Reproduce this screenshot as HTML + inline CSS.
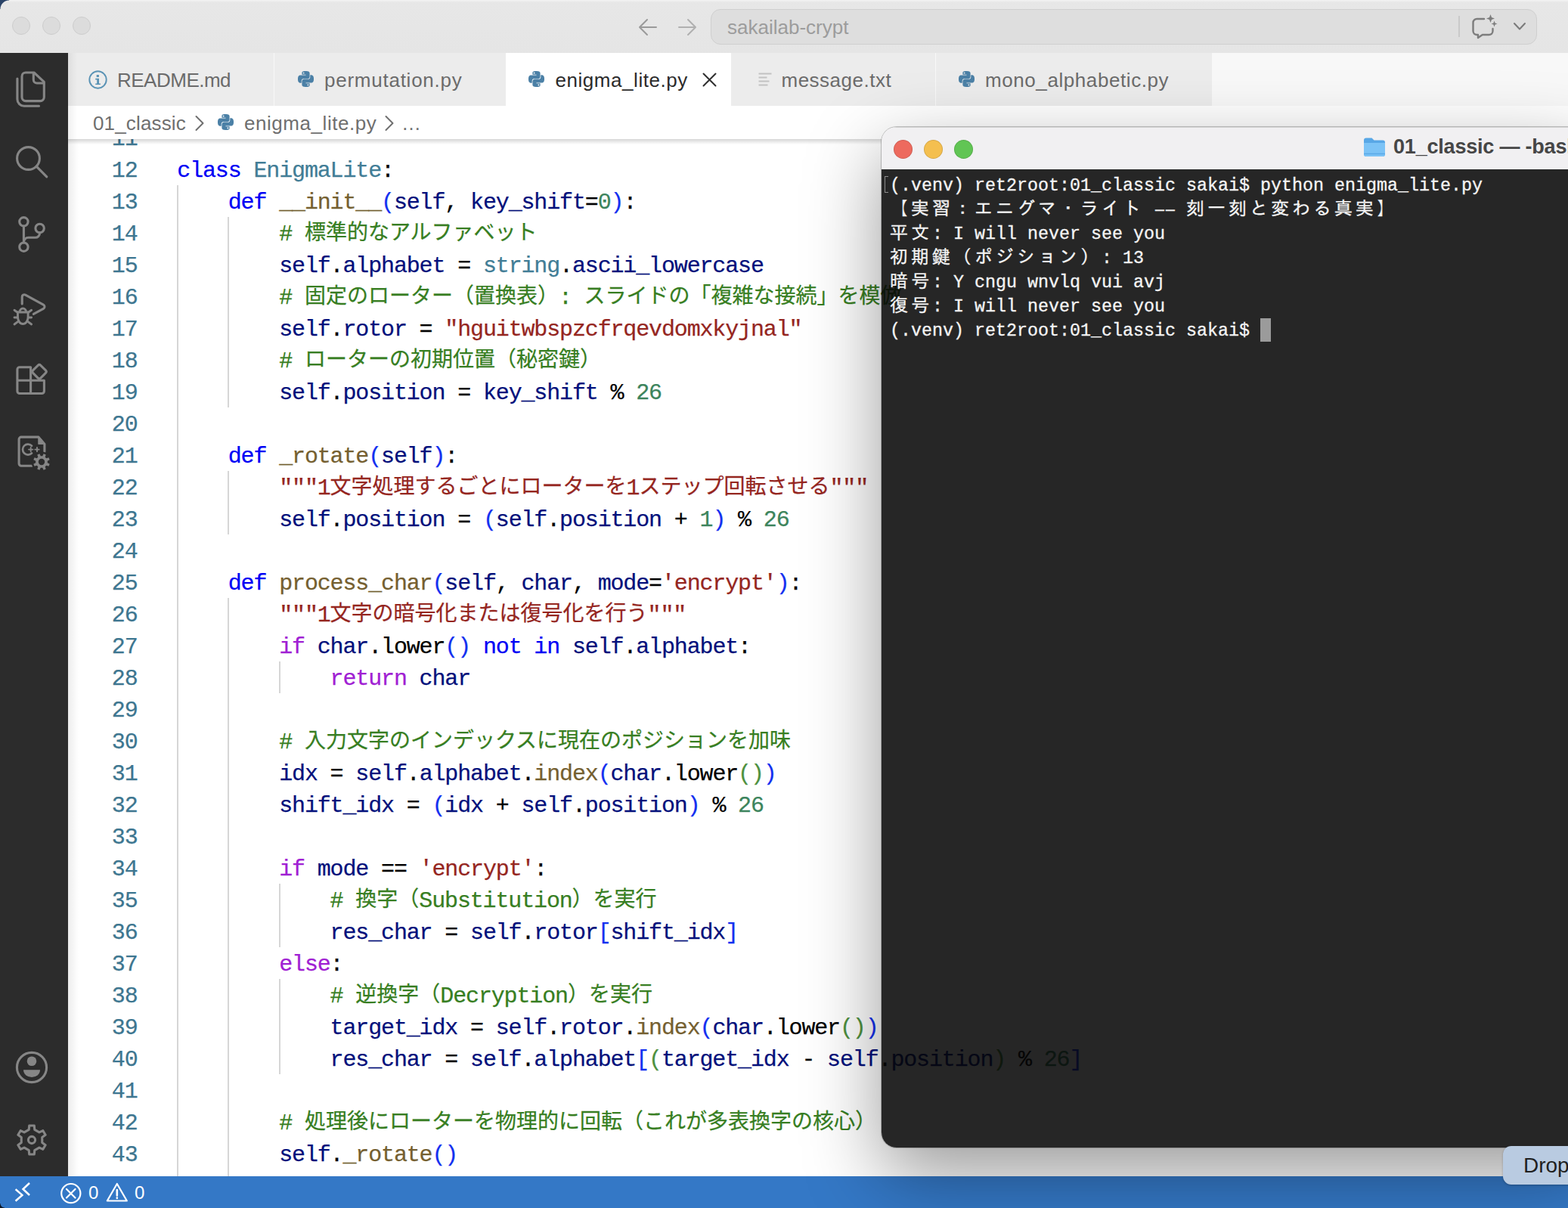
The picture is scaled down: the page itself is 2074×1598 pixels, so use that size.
<!DOCTYPE html>
<html><head><meta charset="utf-8"><title>enigma_lite.py</title>
<style>
html,body{margin:0;padding:0}
body{width:2074px;height:1598px;overflow:hidden;position:relative;background:#fff;font-family:"Liberation Sans",sans-serif}
.abs{position:absolute}
#title{position:absolute;left:0;top:0;width:2074px;height:70px;background:linear-gradient(#f4f4f4 0,#e7e7e7 3px,#e5e5e5 100%)}
.tl0{position:absolute;top:22px;width:22px;height:22px;border-radius:50%;background:#dcdcdc;border:1px solid #cdcdcd}
#search{position:absolute;left:940px;top:11.5px;width:1091px;height:45px;border:1.5px solid #cfcfcf;border-radius:13px;background:#dedede;box-sizing:content-box}
#act{position:absolute;left:0;top:70px;width:90px;height:1486px;background:#2c2c2c}
#tabs{position:absolute;left:90px;top:70px;width:1984px;height:70px;background:#f8f8f8}
.tab{position:absolute;top:0;height:70px;background:#ececec;font-size:26px;line-height:72px;color:#6b6b6b;white-space:pre}
.tab span{position:absolute;top:0}
#bc{position:absolute;left:90px;top:140px;width:1984px;height:44px;background:#fff;font-size:26px;line-height:46px;color:#6f6f6f;white-space:pre}
#bc span{position:absolute;top:0}
#ed{position:absolute;left:0;top:184px;width:2074px;height:1372px;overflow:hidden}
#edi{position:absolute;left:0;top:-184px;width:2074px;height:1800px}
.ln{position:absolute;left:100px;width:81.5px;text-align:right;height:42px;line-height:42px;font-family:"Liberation Mono",monospace;font-size:30px;letter-spacing:-1.145px;color:#3d7690;margin-top:1.5px;-webkit-text-stroke:.25px}
.cl{position:absolute;left:234.3px;height:42px;line-height:42px;font-family:"Liberation Mono",monospace;font-size:30px;letter-spacing:-1.145px;color:#000;white-space:pre;margin-top:1.5px;-webkit-text-stroke:.25px}
.cj,.tj{display:inline-block;position:relative;white-space:nowrap;letter-spacing:0;vertical-align:top;overflow:hidden}
.cj{height:42px;line-height:42px;font-size:28px;font-family:"Liberation Mono","Noto Sans CJK JP",monospace}
.ct{color:inherit}
.ig{position:absolute;width:2px;background:#d6d6d6}
#status{position:absolute;left:0;top:1556px;width:2074px;height:42px;background:#3478c6;color:#fff;font-size:24px;line-height:44px}
#status span{position:absolute;top:0}
#term{position:absolute;left:1166px;top:167.5px;width:940px;height:1350px;border-radius:20px;overflow:hidden;box-shadow:0 36px 100px 0 rgba(0,0,0,.40),0 0 0 1px rgba(0,0,0,.22)}
#tt{position:absolute;left:0;top:0;width:100%;height:56.5px;background:#f1f0f2;border-top:1.5px solid #d4d4d4;box-sizing:border-box}
#tb{position:absolute;left:0;top:56.5px;width:100%;height:1294px;background:rgba(6,6,6,.87)}
.dot{position:absolute;top:16.5px;width:23px;height:23px;border-radius:50%;border:1px solid rgba(0,0,0,.12);box-sizing:content-box}
.tl{position:absolute;left:11px;height:32px;line-height:32px;font-family:"Liberation Mono",monospace;font-size:23.333px;color:#f4f4f4;white-space:pre;-webkit-text-stroke:.3px}
.tj{height:32px;line-height:32px;font-size:24px;letter-spacing:4px;font-family:"Liberation Mono","IPAGothic","Noto Sans CJK JP",monospace}
.md{display:inline-block;width:14px;transform:scaleX(.84)}
#drop{position:absolute;left:1988px;top:1516px;width:120px;height:51px;border-radius:11px;background:#b9cbe1;color:#1f1f1f;font-size:28px;line-height:52px;box-shadow:0 1px 3px rgba(0,0,0,.25)}
</style></head><body>

<!-- editor area -->
<div id="ed"><div id="edi">
<div class="ig" style="left:233.8px;top:245px;height:1344px"></div><div class="ig" style="left:301.2px;top:287px;height:252px"></div><div class="ig" style="left:301.2px;top:623px;height:84px"></div><div class="ig" style="left:301.2px;top:791px;height:798px"></div><div class="ig" style="left:368.6px;top:875px;height:42px"></div><div class="ig" style="left:368.6px;top:1169px;height:84px"></div><div class="ig" style="left:368.6px;top:1295px;height:126px"></div>
<div class="ln" style="top:161px">11</div><div class="ln" style="top:203px">12</div><div class="cl" style="top:203px"><span style="color:#0000f5">class</span> <span style="color:#417d96">EnigmaLite</span>:</div><div class="ln" style="top:245px">13</div><div class="cl" style="top:245px">    <span style="color:#0000f5">def</span> <span style="color:#755f30">__init__</span><span style="color:#1330f0">(</span><span style="color:#03107b">self</span>, <span style="color:#03107b">key_shift</span>=<span style="color:#3c845c">0</span><span style="color:#1330f0">)</span>:</div><div class="ln" style="top:287px">14</div><div class="cl" style="top:287px">        <span style="color:#377e22"># <span class="cj" style="width:308px"><span class="ct">標準的なアルファベット</span></span></span></div><div class="ln" style="top:329px">15</div><div class="cl" style="top:329px">        <span style="color:#03107b">self</span>.<span style="color:#03107b">alphabet</span> = <span style="color:#417d96">string</span>.<span style="color:#03107b">ascii_lowercase</span></div><div class="ln" style="top:371px">16</div><div class="cl" style="top:371px">        <span style="color:#377e22"># <span class="cj" style="width:336px"><span class="ct">固定のローター（置換表）</span></span>: <span class="cj" style="width:420px"><span class="ct">スライドの「複雑な接続」を模倣</span></span></span></div><div class="ln" style="top:413px">17</div><div class="cl" style="top:413px">        <span style="color:#03107b">self</span>.<span style="color:#03107b">rotor</span> = <span style="color:#95261f">&quot;hguitwbspzcfrqevdomxkyjnal&quot;</span></div><div class="ln" style="top:455px">18</div><div class="cl" style="top:455px">        <span style="color:#377e22"># <span class="cj" style="width:392px"><span class="ct">ローターの初期位置（秘密鍵）</span></span></span></div><div class="ln" style="top:497px">19</div><div class="cl" style="top:497px">        <span style="color:#03107b">self</span>.<span style="color:#03107b">position</span> = <span style="color:#03107b">key_shift</span> % <span style="color:#3c845c">26</span></div><div class="ln" style="top:539px">20</div><div class="ln" style="top:581px">21</div><div class="cl" style="top:581px">    <span style="color:#0000f5">def</span> <span style="color:#755f30">_rotate</span><span style="color:#1330f0">(</span><span style="color:#03107b">self</span><span style="color:#1330f0">)</span>:</div><div class="ln" style="top:623px">22</div><div class="cl" style="top:623px">        <span style="color:#95261f">&quot;&quot;&quot;1<span class="cj" style="width:392px"><span class="ct">文字処理するごとにローターを</span></span>1<span class="cj" style="width:252px"><span class="ct">ステップ回転させる</span></span>&quot;&quot;&quot;</span></div><div class="ln" style="top:665px">23</div><div class="cl" style="top:665px">        <span style="color:#03107b">self</span>.<span style="color:#03107b">position</span> = <span style="color:#1330f0">(</span><span style="color:#03107b">self</span>.<span style="color:#03107b">position</span> + <span style="color:#3c845c">1</span><span style="color:#1330f0">)</span> % <span style="color:#3c845c">26</span></div><div class="ln" style="top:707px">24</div><div class="ln" style="top:749px">25</div><div class="cl" style="top:749px">    <span style="color:#0000f5">def</span> <span style="color:#755f30">process_char</span><span style="color:#1330f0">(</span><span style="color:#03107b">self</span>, <span style="color:#03107b">char</span>, <span style="color:#03107b">mode</span>=<span style="color:#95261f">&#x27;encrypt&#x27;</span><span style="color:#1330f0">)</span>:</div><div class="ln" style="top:791px">26</div><div class="cl" style="top:791px">        <span style="color:#95261f">&quot;&quot;&quot;1<span class="cj" style="width:420px"><span class="ct">文字の暗号化または復号化を行う</span></span>&quot;&quot;&quot;</span></div><div class="ln" style="top:833px">27</div><div class="cl" style="top:833px">        <span style="color:#a020d3">if</span> <span style="color:#03107b">char</span>.lower<span style="color:#1330f0">()</span> <span style="color:#0000f5">not</span> <span style="color:#0000f5">in</span> <span style="color:#03107b">self</span>.<span style="color:#03107b">alphabet</span>:</div><div class="ln" style="top:875px">28</div><div class="cl" style="top:875px">            <span style="color:#a020d3">return</span> <span style="color:#03107b">char</span></div><div class="ln" style="top:917px">29</div><div class="ln" style="top:959px">30</div><div class="cl" style="top:959px">        <span style="color:#377e22"># <span class="cj" style="width:644px"><span class="ct">入力文字のインデックスに現在のポジションを加味</span></span></span></div><div class="ln" style="top:1001px">31</div><div class="cl" style="top:1001px">        <span style="color:#03107b">idx</span> = <span style="color:#03107b">self</span>.<span style="color:#03107b">alphabet</span>.<span style="color:#755f30">index</span><span style="color:#1330f0">(</span><span style="color:#03107b">char</span>.lower<span style="color:#4e913f">()</span><span style="color:#1330f0">)</span></div><div class="ln" style="top:1043px">32</div><div class="cl" style="top:1043px">        <span style="color:#03107b">shift_idx</span> = <span style="color:#1330f0">(</span><span style="color:#03107b">idx</span> + <span style="color:#03107b">self</span>.<span style="color:#03107b">position</span><span style="color:#1330f0">)</span> % <span style="color:#3c845c">26</span></div><div class="ln" style="top:1085px">33</div><div class="ln" style="top:1127px">34</div><div class="cl" style="top:1127px">        <span style="color:#a020d3">if</span> <span style="color:#03107b">mode</span> == <span style="color:#95261f">&#x27;encrypt&#x27;</span>:</div><div class="ln" style="top:1169px">35</div><div class="cl" style="top:1169px">            <span style="color:#377e22"># <span class="cj" style="width:84px"><span class="ct">換字（</span></span>Substitution<span class="cj" style="width:112px"><span class="ct">）を実行</span></span></span></div><div class="ln" style="top:1211px">36</div><div class="cl" style="top:1211px">            <span style="color:#03107b">res_char</span> = <span style="color:#03107b">self</span>.<span style="color:#03107b">rotor</span><span style="color:#1330f0">[</span><span style="color:#03107b">shift_idx</span><span style="color:#1330f0">]</span></div><div class="ln" style="top:1253px">37</div><div class="cl" style="top:1253px">        <span style="color:#a020d3">else</span>:</div><div class="ln" style="top:1295px">38</div><div class="cl" style="top:1295px">            <span style="color:#377e22"># <span class="cj" style="width:112px"><span class="ct">逆換字（</span></span>Decryption<span class="cj" style="width:112px"><span class="ct">）を実行</span></span></span></div><div class="ln" style="top:1337px">39</div><div class="cl" style="top:1337px">            <span style="color:#03107b">target_idx</span> = <span style="color:#03107b">self</span>.<span style="color:#03107b">rotor</span>.<span style="color:#755f30">index</span><span style="color:#1330f0">(</span><span style="color:#03107b">char</span>.lower<span style="color:#4e913f">()</span><span style="color:#1330f0">)</span></div><div class="ln" style="top:1379px">40</div><div class="cl" style="top:1379px">            <span style="color:#03107b">res_char</span> = <span style="color:#03107b">self</span>.<span style="color:#03107b">alphabet</span><span style="color:#1330f0">[</span><span style="color:#4e913f">(</span><span style="color:#03107b">target_idx</span> - <span style="color:#03107b">self</span>.<span style="color:#03107b">position</span><span style="color:#4e913f">)</span> % <span style="color:#3c845c">26</span><span style="color:#1330f0">]</span></div><div class="ln" style="top:1421px">41</div><div class="ln" style="top:1463px">42</div><div class="cl" style="top:1463px">        <span style="color:#377e22"># <span class="cj" style="width:756px"><span class="ct">処理後にローターを物理的に回転（これが多表換字の核心）</span></span></span></div><div class="ln" style="top:1505px">43</div><div class="cl" style="top:1505px">        <span style="color:#03107b">self</span>.<span style="color:#755f30">_rotate</span><span style="color:#1330f0">()</span></div>
</div>
<div class="abs" style="left:90px;top:0;width:1984px;height:7px;background:linear-gradient(rgba(0,0,0,.16),rgba(0,0,0,0))"></div>
<div class="abs" style="left:90px;top:0;width:14px;height:1372px;background:linear-gradient(90deg,rgba(0,0,0,.07),rgba(0,0,0,0))"></div>
</div>

<!-- title bar -->
<div id="title">
<div class="tl0" style="left:16px"></div><div class="tl0" style="left:56px"></div><div class="tl0" style="left:96px"></div>
<svg class="abs" style="left:843px;top:23px" width="28" height="26" viewBox="0 0 28 26" fill="none" stroke="#9a9a9a" stroke-width="2" stroke-linecap="round" stroke-linejoin="round"><path d="M25 13H3M13 3L3 13l10 10"/></svg>
<svg class="abs" style="left:895px;top:23px" width="28" height="26" viewBox="0 0 28 26" fill="none" stroke="#b0b0b0" stroke-width="2" stroke-linecap="round" stroke-linejoin="round"><path d="M3 13h22M15 3l10 10-10 10"/></svg>
<div id="search"></div>
<div class="abs" style="left:962px;top:12px;height:48px;line-height:48px;font-size:26px;color:#9c9c9c">sakailab-crypt</div>
<div class="abs" style="left:1929px;top:21px;width:2px;height:28px;background:#c9c9c9"></div>
<svg class="abs" style="left:1944px;top:16px" width="38" height="36" viewBox="0 0 38 36" fill="none" stroke="#7d7d7d" stroke-width="2.4" stroke-linecap="round" stroke-linejoin="round"><path d="M19 9H9.5a5 5 0 0 0-5 5v11a5 5 0 0 0 5 5H11v4l5.800-4h8.700a5 5 0 0 0 5-5V22"/><path fill="#7d7d7d" stroke="none" d="M27.500 3l1.500 4 4 1.500-4 1.500-1.500 4-1.500-4-4-1.500 4-1.500zM32.500 11.500l1.100 2.900 2.900 1.100-2.900 1.100-1.100 2.900-1.100-2.900-2.900-1.100 2.900-1.100z"/></svg>
<svg class="abs" style="left:2001px;top:29px" width="18" height="12" viewBox="0 0 18 12" fill="none" stroke="#7a7a7a" stroke-width="2" stroke-linecap="round" stroke-linejoin="round"><path d="M2 2l7 7.500L16 2"/></svg>
</div>

<!-- tabs -->
<div id="tabs">
<div class="tab" style="left:0;width:272px"><span style="left:65px;letter-spacing:-.5px">README.md</span></div>
<div class="tab" style="left:273px;width:306px"><span style="left:66px;letter-spacing:.75px">permutation.py</span></div>
<div class="tab" style="left:579px;width:298px;background:#fff;color:#2b2b2b"><span style="left:65.500px;letter-spacing:.55px">enigma_lite.py</span></div>
<div class="tab" style="left:877px;width:270px"><span style="left:66.500px;letter-spacing:.5px">message.txt</span></div>
<div class="tab" style="left:1148px;width:365px"><span style="left:65px;letter-spacing:.58px">mono_alphabetic.py</span></div>
</div>
<svg class="abs" style="left:116.500px;top:92.500px" width="25" height="25" viewBox="0 0 25 25"><circle cx="12.500" cy="12.500" r="11.200" fill="none" stroke="#5a93b5" stroke-width="1.900"/><path fill="#5a93b5" d="M10.700 6h3.200v2.900h-3.200zM9.200 10.800h4.800v6.600h1.900v1.700H9.200v-1.700h2v-4.900h-2z"/></svg>
<svg class="abs" style="left:393.5px;top:94px" width="21" height="21" viewBox="0 0 24 24"><path fill="#4b80a6" d="M14.25.18l.9.2.73.26.59.3.45.32.34.34.25.34.16.33.1.3.04.26.02.2-.01.13V8.5l-.05.63-.13.55-.21.46-.26.38-.3.31-.33.25-.35.19-.35.14-.33.1-.3.07-.26.04-.21.02H8.77l-.69.05-.59.14-.5.22-.41.27-.33.32-.27.35-.2.36-.15.37-.1.35-.07.32-.04.27-.02.21v3.06H3.17l-.21-.03-.28-.07-.32-.12-.35-.18-.36-.26-.36-.36-.35-.46-.32-.59-.28-.73-.21-.88-.14-1.05-.05-1.23.06-1.22.16-1.04.24-.87.32-.71.36-.57.4-.44.42-.33.42-.24.4-.16.36-.1.32-.05.24-.01h.16l.06.01h8.16v-.83H6.18l-.01-2.75-.02-.37.05-.34.11-.31.17-.28.25-.26.31-.23.38-.2.44-.18.51-.15.58-.12.64-.1.71-.06.77-.04.84-.02 1.27.05zm-6.3 1.98l-.23.33-.08.41.08.41.23.34.33.22.41.09.41-.09.33-.22.23-.34.08-.41-.08-.41-.23-.33-.33-.22-.41-.09-.41.09zm13.09 3.95l.28.06.32.12.35.18.36.27.36.35.35.47.32.59.28.73.21.88.14 1.04.05 1.23-.06 1.23-.16 1.04-.24.86-.32.71-.36.57-.4.45-.42.33-.42.24-.4.16-.36.09-.32.05-.24.02-.16-.01h-8.22v.82h5.84l.01 2.76.02.36-.05.34-.11.31-.17.29-.25.25-.31.24-.38.2-.44.17-.51.15-.58.13-.64.09-.71.07-.77.04-.84.01-1.27-.04-1.07-.14-.9-.2-.73-.25-.59-.3-.45-.33-.34-.34-.25-.34-.16-.33-.1-.3-.04-.25-.02-.2.01-.13v-5.34l.05-.64.13-.54.21-.46.26-.38.3-.32.33-.24.35-.2.35-.14.33-.1.3-.06.26-.04.21-.02.13-.01h5.84l.69-.05.59-.14.5-.21.41-.28.33-.32.27-.35.2-.36.15-.36.1-.35.07-.32.04-.28.02-.21V6.07h2.09l.14.01zm-6.47 14.25l-.23.33-.08.41.08.41.23.33.33.23.41.08.41-.08.33-.23.23-.33.08-.41-.08-.41-.23-.33-.33-.23-.41-.08-.41.08z"/></svg><svg class="abs" style="left:699px;top:94px" width="21" height="21" viewBox="0 0 24 24"><path fill="#4b80a6" d="M14.25.18l.9.2.73.26.59.3.45.32.34.34.25.34.16.33.1.3.04.26.02.2-.01.13V8.5l-.05.63-.13.55-.21.46-.26.38-.3.31-.33.25-.35.19-.35.14-.33.1-.3.07-.26.04-.21.02H8.77l-.69.05-.59.14-.5.22-.41.27-.33.32-.27.35-.2.36-.15.37-.1.35-.07.32-.04.27-.02.21v3.06H3.17l-.21-.03-.28-.07-.32-.12-.35-.18-.36-.26-.36-.36-.35-.46-.32-.59-.28-.73-.21-.88-.14-1.05-.05-1.23.06-1.22.16-1.04.24-.87.32-.71.36-.57.4-.44.42-.33.42-.24.4-.16.36-.1.32-.05.24-.01h.16l.06.01h8.16v-.83H6.18l-.01-2.75-.02-.37.05-.34.11-.31.17-.28.25-.26.31-.23.38-.2.44-.18.51-.15.58-.12.64-.1.71-.06.77-.04.84-.02 1.27.05zm-6.3 1.98l-.23.33-.08.41.08.41.23.34.33.22.41.09.41-.09.33-.22.23-.34.08-.41-.08-.41-.23-.33-.33-.22-.41-.09-.41.09zm13.09 3.95l.28.06.32.12.35.18.36.27.36.35.35.47.32.59.28.73.21.88.14 1.04.05 1.23-.06 1.23-.16 1.04-.24.86-.32.71-.36.57-.4.45-.42.33-.42.24-.4.16-.36.09-.32.05-.24.02-.16-.01h-8.22v.82h5.84l.01 2.76.02.36-.05.34-.11.31-.17.29-.25.25-.31.24-.38.2-.44.17-.51.15-.58.13-.64.09-.71.07-.77.04-.84.01-1.27-.04-1.07-.14-.9-.2-.73-.25-.59-.3-.45-.33-.34-.34-.25-.34-.16-.33-.1-.3-.04-.25-.02-.2.01-.13v-5.34l.05-.64.13-.54.21-.46.26-.38.3-.32.33-.24.35-.2.35-.14.33-.1.3-.06.26-.04.21-.02.13-.01h5.84l.69-.05.59-.14.5-.21.41-.28.33-.32.27-.35.2-.36.15-.36.1-.35.07-.32.04-.28.02-.21V6.07h2.09l.14.01zm-6.47 14.25l-.23.33-.08.41.08.41.23.33.33.23.41.08.41-.08.33-.23.23-.33.08-.41-.08-.41-.23-.33-.33-.23-.41-.08-.41.08z"/></svg><svg class="abs" style="left:1267.5px;top:94px" width="21" height="21" viewBox="0 0 24 24"><path fill="#4b80a6" d="M14.25.18l.9.2.73.26.59.3.45.32.34.34.25.34.16.33.1.3.04.26.02.2-.01.13V8.5l-.05.63-.13.55-.21.46-.26.38-.3.31-.33.25-.35.19-.35.14-.33.1-.3.07-.26.04-.21.02H8.77l-.69.05-.59.14-.5.22-.41.27-.33.32-.27.35-.2.36-.15.37-.1.35-.07.32-.04.27-.02.21v3.06H3.17l-.21-.03-.28-.07-.32-.12-.35-.18-.36-.26-.36-.36-.35-.46-.32-.59-.28-.73-.21-.88-.14-1.05-.05-1.23.06-1.22.16-1.04.24-.87.32-.71.36-.57.4-.44.42-.33.42-.24.4-.16.36-.1.32-.05.24-.01h.16l.06.01h8.16v-.83H6.18l-.01-2.75-.02-.37.05-.34.11-.31.17-.28.25-.26.31-.23.38-.2.44-.18.51-.15.58-.12.64-.1.71-.06.77-.04.84-.02 1.27.05zm-6.3 1.98l-.23.33-.08.41.08.41.23.34.33.22.41.09.41-.09.33-.22.23-.34.08-.41-.08-.41-.23-.33-.33-.22-.41-.09-.41.09zm13.09 3.95l.28.06.32.12.35.18.36.27.36.35.35.47.32.59.28.73.21.88.14 1.04.05 1.23-.06 1.23-.16 1.04-.24.86-.32.71-.36.57-.4.45-.42.33-.42.24-.4.16-.36.09-.32.05-.24.02-.16-.01h-8.22v.82h5.84l.01 2.76.02.36-.05.34-.11.31-.17.29-.25.25-.31.24-.38.2-.44.17-.51.15-.58.13-.64.09-.71.07-.77.04-.84.01-1.27-.04-1.07-.14-.9-.2-.73-.25-.59-.3-.45-.33-.34-.34-.25-.34-.16-.33-.1-.3-.04-.25-.02-.2.01-.13v-5.34l.05-.64.13-.54.21-.46.26-.38.3-.32.33-.24.35-.2.35-.14.33-.1.3-.06.26-.04.21-.02.13-.01h5.84l.69-.05.59-.14.5-.21.41-.28.33-.32.27-.35.2-.36.15-.36.1-.35.07-.32.04-.28.02-.21V6.07h2.09l.14.01zm-6.47 14.25l-.23.33-.08.41.08.41.23.33.33.23.41.08.41-.08.33-.23.23-.33.08-.41-.08-.41-.23-.33-.33-.23-.41-.08-.41.08z"/></svg>
<svg class="abs" style="left:929px;top:96px" width="20" height="20" viewBox="0 0 20 20" fill="none" stroke="#2f2f2f" stroke-width="2" stroke-linecap="round"><path d="M1.500 1.500l16 16M17.500 1.500l-16 16"/></svg>
<svg class="abs" style="left:1003px;top:96px" width="18" height="18" viewBox="0 0 18 18" fill="none" stroke="#c2c2c2" stroke-width="2"><path d="M0.500 1.500h17M0.500 6.500h11M0.500 11.500h14M0.500 16.500h12"/></svg>

<!-- breadcrumb -->
<div id="bc"><span style="left:33px;letter-spacing:.15px">01_classic</span><span style="left:233px;letter-spacing:.55px">enigma_lite.py</span><span style="left:441px">…</span></div>
<svg class="abs" style="left:257px;top:152px" width="14" height="22" viewBox="0 0 14 22" fill="none" stroke="#6f6f6f" stroke-width="2" stroke-linecap="round" stroke-linejoin="round"><path d="M2.500 2l9 9-9 9"/></svg>
<svg class="abs" style="left:508px;top:152px" width="14" height="22" viewBox="0 0 14 22" fill="none" stroke="#6f6f6f" stroke-width="2" stroke-linecap="round" stroke-linejoin="round"><path d="M2.500 2l9 9-9 9"/></svg>
<svg class="abs" style="left:288px;top:151px" width="21" height="21" viewBox="0 0 24 24"><path fill="#4b80a6" d="M14.25.18l.9.2.73.26.59.3.45.32.34.34.25.34.16.33.1.3.04.26.02.2-.01.13V8.5l-.05.63-.13.55-.21.46-.26.38-.3.31-.33.25-.35.19-.35.14-.33.1-.3.07-.26.04-.21.02H8.77l-.69.05-.59.14-.5.22-.41.27-.33.32-.27.35-.2.36-.15.37-.1.35-.07.32-.04.27-.02.21v3.06H3.17l-.21-.03-.28-.07-.32-.12-.35-.18-.36-.26-.36-.36-.35-.46-.32-.59-.28-.73-.21-.88-.14-1.05-.05-1.23.06-1.22.16-1.04.24-.87.32-.71.36-.57.4-.44.42-.33.42-.24.4-.16.36-.1.32-.05.24-.01h.16l.06.01h8.16v-.83H6.18l-.01-2.75-.02-.37.05-.34.11-.31.17-.28.25-.26.31-.23.38-.2.44-.18.51-.15.58-.12.64-.1.71-.06.77-.04.84-.02 1.27.05zm-6.3 1.98l-.23.33-.08.41.08.41.23.34.33.22.41.09.41-.09.33-.22.23-.34.08-.41-.08-.41-.23-.33-.33-.22-.41-.09-.41.09zm13.09 3.95l.28.06.32.12.35.18.36.27.36.35.35.47.32.59.28.73.21.88.14 1.04.05 1.23-.06 1.23-.16 1.04-.24.86-.32.71-.36.57-.4.45-.42.33-.42.24-.4.16-.36.09-.32.05-.24.02-.16-.01h-8.22v.82h5.84l.01 2.76.02.36-.05.34-.11.31-.17.29-.25.25-.31.24-.38.2-.44.17-.51.15-.58.13-.64.09-.71.07-.77.04-.84.01-1.27-.04-1.07-.14-.9-.2-.73-.25-.59-.3-.45-.33-.34-.34-.25-.34-.16-.33-.1-.3-.04-.25-.02-.2.01-.13v-5.34l.05-.64.13-.54.21-.46.26-.38.3-.32.33-.24.35-.2.35-.14.33-.1.3-.06.26-.04.21-.02.13-.01h5.84l.69-.05.59-.14.5-.21.41-.28.33-.32.27-.35.2-.36.15-.36.1-.35.07-.32.04-.28.02-.21V6.07h2.09l.14.01zm-6.47 14.25l-.23.33-.08.41.08.41.23.33.33.23.41.08.41-.08.33-.23.23-.33.08-.41-.08-.41-.23-.33-.33-.23-.41-.08-.41.08z"/></svg>

<div class="abs" style="left:90px;top:70px;width:12px;height:114px;background:linear-gradient(90deg,rgba(0,0,0,.06),rgba(0,0,0,0))"></div>
<!-- activity bar -->
<div id="act"></div>
<svg class="abs" style="left:0;top:70px" width="90" height="1486" viewBox="0 70 90 1486" fill="none" stroke="#868686" stroke-width="3.100" stroke-linecap="round" stroke-linejoin="round">
<!-- files -->
<path d="M34 96h11l13.300 12.300v20.300a5 5 0 0 1-5 5h-19.300a5 5 0 0 1-5-5v-27.600a5 5 0 0 1 5-5z"/><path d="M44.300 96.500v9a4.500 4.500 0 0 0 4.500 4.500h9"/><path d="M22.900 104v27.300a9 9 0 0 0 9 9h19.600"/>
<!-- search -->
<circle cx="37.500" cy="209.500" r="14.900"/><path d="M48.200 220.200l13.600 13.600"/>
<!-- scm -->
<circle cx="31.400" cy="293.300" r="5.700"/><circle cx="31.400" cy="326.700" r="5.700"/><circle cx="52.600" cy="302" r="5.700"/><path d="M31.400 299v22M52.600 307.700v.600a6 6 0 0 1-6 6h-9.200a6 6 0 0 0-6 6"/>
<!-- debug -->
<path d="M29.200 402v-9.300a3 3 0 0 1 4.400-2.600l23.800 13a3 3 0 0 1 0 5.300l-13 7"/>
<path d="M23.500 413h13.600v6.500a6.800 9 0 0 1-13.600 0zM26 413a4.300 5 0 0 1 8.600 0" stroke-width="2.900"/><path d="M19 410.300l4.200 2.900M19 420h4.300M19 429l4.800-3.600M41.600 410.300l-4.200 2.900M41.600 420h-4.300M41.600 429l-4.800-3.600" stroke-width="2.900"/>
<!-- extensions -->
<path d="M40.600 485.800h-14.700a3 3 0 0 0-3 3v28.700a3 3 0 0 0 3 3h29.500a3 3 0 0 0 3-3v-14.300h-35.500M40.600 485.800v34.700"/><rect x="44.800" y="484.500" width="14.400" height="14.400" rx="2.500" transform="rotate(45 52 491.700)"/>
<!-- c++ gear -->
<path d="M42 616.200h-13.900a3 3 0 0 1-3-3v-32.100a3 3 0 0 1 3-3h22.700l8.100 9.500v10"/><path d="M51 577.500v9.800h8.400z" fill="#868686" stroke-width="1.500"/><path d="M42 589.700a7 7 0 1 0 0 9.800" stroke-width="2.700"/><path d="M38 594.600h5.400M40.700 591.900v5.400M46.300 594.600h5.400M49 591.900v5.400" stroke-width="1.900"/>
<!-- account -->
<circle cx="42" cy="1412" r="19.600"/><circle cx="42" cy="1403.800" r="6.300" fill="#868686" stroke="none"/><path d="M31 1415.300h22a11 9.800 0 0 1-22 0z" fill="#868686" stroke="none"/>
</svg>
<!-- gears -->
<svg class="abs" style="left:21px;top:1487px" width="42" height="42" viewBox="-21 -21 42 42" fill="none" stroke="#868686" stroke-width="3.100" stroke-linejoin="round"><path d="M13.75 3.56L18.11 6.68L14.84 12.34L9.96 10.12L3.79 13.69L3.27 19.02L-3.27 19.02L-3.79 13.69L-9.96 10.12L-14.84 12.34L-18.11 6.68L-13.75 3.56L-13.75 -3.56L-18.11 -6.68L-14.84 -12.34L-9.96 -10.12L-3.79 -13.69L-3.27 -19.02L3.27 -19.02L3.79 -13.69L9.96 -10.12L14.84 -12.34L18.11 -6.68L13.75 -3.56Z"/><circle r="4.600"/></svg>
<svg class="abs" style="left:41.200px;top:596.700px" width="28" height="28" viewBox="-14 -14 28 28"><circle r="13.500" fill="#2c2c2c"/><path d="M7.81 1.20L10.68 2.64L9.42 5.68L6.37 4.67L4.67 6.37L5.68 9.42L2.64 10.68L1.20 7.81L-1.20 7.81L-2.64 10.68L-5.68 9.42L-4.67 6.37L-6.37 4.67L-9.42 5.68L-10.68 2.64L-7.81 1.20L-7.81 -1.20L-10.68 -2.64L-9.42 -5.68L-6.37 -4.67L-4.67 -6.37L-5.68 -9.42L-2.64 -10.68L-1.20 -7.81L1.20 -7.81L2.64 -10.68L5.68 -9.42L4.67 -6.37L6.37 -4.67L9.42 -5.68L10.68 -2.64L7.81 -1.20Z" fill="#868686"/><circle r="4.200" fill="#2c2c2c"/></svg>

<!-- status bar -->
<div id="status"><span style="left:117px">0</span><span style="left:178px">0</span></div>
<svg class="abs" style="left:0;top:1556px" width="220" height="42" viewBox="0 1556 220 42" fill="none" stroke="#fff" stroke-width="2.200" stroke-linecap="round" stroke-linejoin="round">
<path d="M20.600 1573.200l8.800 7.700-8.800 7.800M39 1565l-8.500 8 8.500 8" stroke-width="2.500" stroke-linecap="butt" stroke-linejoin="miter"/>
<circle cx="93.800" cy="1578.600" r="12.600"/><path d="M88 1573l11.500 11.500M99.500 1573l-11.500 11.500"/>
<path d="M154.800 1566l13 22.500h-26z"/><path d="M154.800 1574v7.500M154.800 1584.500v.5" stroke-width="2.600"/>
</svg>

<!-- terminal -->
<div id="term"><div id="tt">
<div class="dot" style="left:16px;background:#ed6a5e"></div><div class="dot" style="left:56px;background:#f4bf4f"></div><div class="dot" style="left:96px;background:#61c554"></div>
<svg class="abs" style="left:637px;top:10.500px" width="30" height="30" viewBox="0 0 30 30"><path d="M1 6.500a3 3 0 0 1 3-3h7.500l3 3H26a3 3 0 0 1 3 3V25a3 3 0 0 1-3 3H4a3 3 0 0 1-3-3z" fill="#58a7e6"/><path d="M1 10h28v15a3 3 0 0 1-3 3H4a3 3 0 0 1-3-3z" fill="#7cc3f6"/><path d="M1 24.500h28" stroke="#5aa9e8" stroke-width="1.500"/></svg>
<div class="abs" style="left:677px;top:-1.200px;height:54px;line-height:54px;font-size:27px;font-weight:bold;color:#464646;white-space:pre;letter-spacing:-.2px">01_classic — -bash</div>
</div>
<div id="tb">
<div class="abs" style="left:3.500px;top:9px;width:5px;height:21.500px;border:1.500px solid #8d8d8d;border-right:none;box-sizing:border-box"></div>
<div class="abs" style="left:500.500px;top:196.500px;width:14px;height:31px;background:#9b9b9b"></div>
</div>
<div class="abs" style="left:0;top:0;width:100%;height:100%"><div class="tl" style="top:62.4px">(.venv) ret2root:01_classic sakai$ python enigma_lite.py</div><div class="tl" style="top:94.4px"><span class="tj" style="width:336px"><span class="ct">【実習：エニグマ・ライト</span></span> <span class="md">—</span><span class="md">—</span> <span class="tj" style="width:280px"><span class="ct">刻一刻と変わる真実】</span></span></div><div class="tl" style="top:126.4px"><span class="tj" style="width:56px"><span class="ct">平文</span></span>: I will never see you</div><div class="tl" style="top:158.4px"><span class="tj" style="width:280px"><span class="ct">初期鍵（ポジション）</span></span>: 13</div><div class="tl" style="top:190.4px"><span class="tj" style="width:56px"><span class="ct">暗号</span></span>: Y cngu wnvlq vui avj</div><div class="tl" style="top:222.4px"><span class="tj" style="width:56px"><span class="ct">復号</span></span>: I will never see you</div><div class="tl" style="top:254.4px">(.venv) ret2root:01_classic sakai$ </div></div>
</div>

<div class="abs" style="left:0;top:0;width:12px;height:12px;background:radial-gradient(circle at 100% 100%,rgba(0,0,0,0) 11px,#2b4468 12px)"></div>
<div class="abs" style="left:0;top:1592px;width:6px;height:6px;background:radial-gradient(circle at 100% 0,rgba(0,0,0,0) 5px,#0a1626 6px)"></div>
<div id="drop"><span class="abs" style="left:27px;top:0">Drop</span></div>

</body></html>
